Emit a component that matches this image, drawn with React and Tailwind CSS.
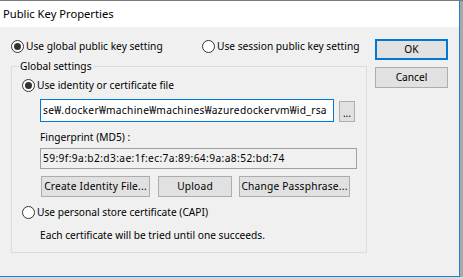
import React from "react"

const font = { fontFamily: '"Noto Sans", "Noto Sans CJK KR", sans-serif' }

function Radio({ checked, label }) {
  return (
    <div className="flex items-center h-[16px]">
      <div className="w-[13px] h-[13px] rounded-full border border-[#333333] bg-white flex items-center justify-center shrink-0">
        {checked && <div className="w-[7px] h-[7px] rounded-full bg-[#333333]" />}
      </div>
      <span className="ml-[2px] text-[10.2px] text-black whitespace-nowrap leading-none">{label}</span>
    </div>
  )
}

function Btn({ children, className }) {
  return (
    <div className={"h-[21px] flex items-center justify-center bg-[#e1e1e1] border border-[#adadad] text-[10.2px] text-black whitespace-nowrap leading-none shrink-0 " + className}>
      {children}
    </div>
  )
}

export default function App() {
  return (
    <div className="w-[463px] h-[279px] bg-[#d9d9d9] overflow-hidden flex flex-col" style={font}>
      <div className="h-[1px] bg-[#7a7a7a] shrink-0" />
      <div className="flex">
        <div className="w-[460px] h-[276px] border-r border-b border-[#1883d7] flex flex-col bg-[#f0f0f0] shrink-0">
          <div className="h-[26px] bg-white flex items-center pl-[3px] text-[11.2px] text-black shrink-0">
            Public Key Properties
          </div>
          <div className="flex flex-1">
            <div className="w-[375px] pl-[11px] shrink-0">
              <div className="mt-[11px] flex">
                <div className="w-[191px] shrink-0">
                  <Radio checked label="Use global public key setting" />
                </div>
                <Radio label="Use session public key setting" />
              </div>
              <div className="mt-[12px] w-[356px] h-[187px] border border-[#dcdcdc] relative">
                <span className="absolute -top-[9px] left-[7px] px-[1px] bg-[#f0f0f0] text-[10.2px] leading-[16px] text-black">
                  Global settings
                </span>
                <div className="mt-[10px] pl-[10px]">
                  <Radio checked label="Use identity or certificate file" />
                </div>
                <div className="mt-[6px] ml-[28px] flex items-start">
                  <div className="w-[294px] h-[23px] border border-[#0078d7] bg-white flex items-center pl-[2px] overflow-hidden shrink-0">
                    <span className="text-[10.2px] tracking-[0.3px] text-black whitespace-nowrap leading-none">
                      se₩.docker₩machine₩machines₩azuredockervm₩id_rsa
                    </span>
                  </div>
                  <Btn className="ml-[5px] mt-[2px] w-[16px] items-end pb-[3px]">...</Btn>
                </div>
                <div className="mt-[7px] ml-[28px] h-[16px] flex items-center text-[10.2px] leading-none text-black">
                  Fingerprint (MD5) :
                </div>
                <div className="mt-[3px] ml-[28px] w-[317px] h-[21px] border border-[#a0a0a0] bg-[#f0f0f0] flex items-center pl-[2px] text-[10.2px] tracking-[0.4px] leading-none text-black">
                  59:9f:9a:b2:d3:ae:1f:ec:7a:89:64:9a:a8:52:bd:74
                </div>
                <div className="mt-[7px] ml-[29px] flex">
                  <Btn className="w-[109px] tracking-[0.2px]">Create Identity File...</Btn>
                  <Btn className="ml-[8px] w-[74px] tracking-[0.2px]">Upload</Btn>
                  <Btn className="ml-[7px] w-[111px] tracking-[0.2px]">Change Passphrase...</Btn>
                </div>
                <div className="mt-[7px] pl-[10px]">
                  <Radio label="Use personal store certificate (CAPI)" />
                </div>
                <div className="mt-[7px] ml-[28px] h-[16px] flex items-center text-[10.2px] leading-none text-black">
                  Each certificate will be tried until one succeeds.
                </div>
              </div>
            </div>
            <div className="pt-[12px] flex flex-col">
              <div className="w-[73px] h-[21px] border-2 border-[#0078d7] bg-[#e1e1e1] flex items-center justify-center text-[10.2px] leading-none text-black">
                OK
              </div>
              <Btn className="mt-[7px] w-[73px]">Cancel</Btn>
            </div>
          </div>
        </div>
        <div className="flex-1 bg-[#a8a8a8]" />
      </div>
    </div>
  )
}
